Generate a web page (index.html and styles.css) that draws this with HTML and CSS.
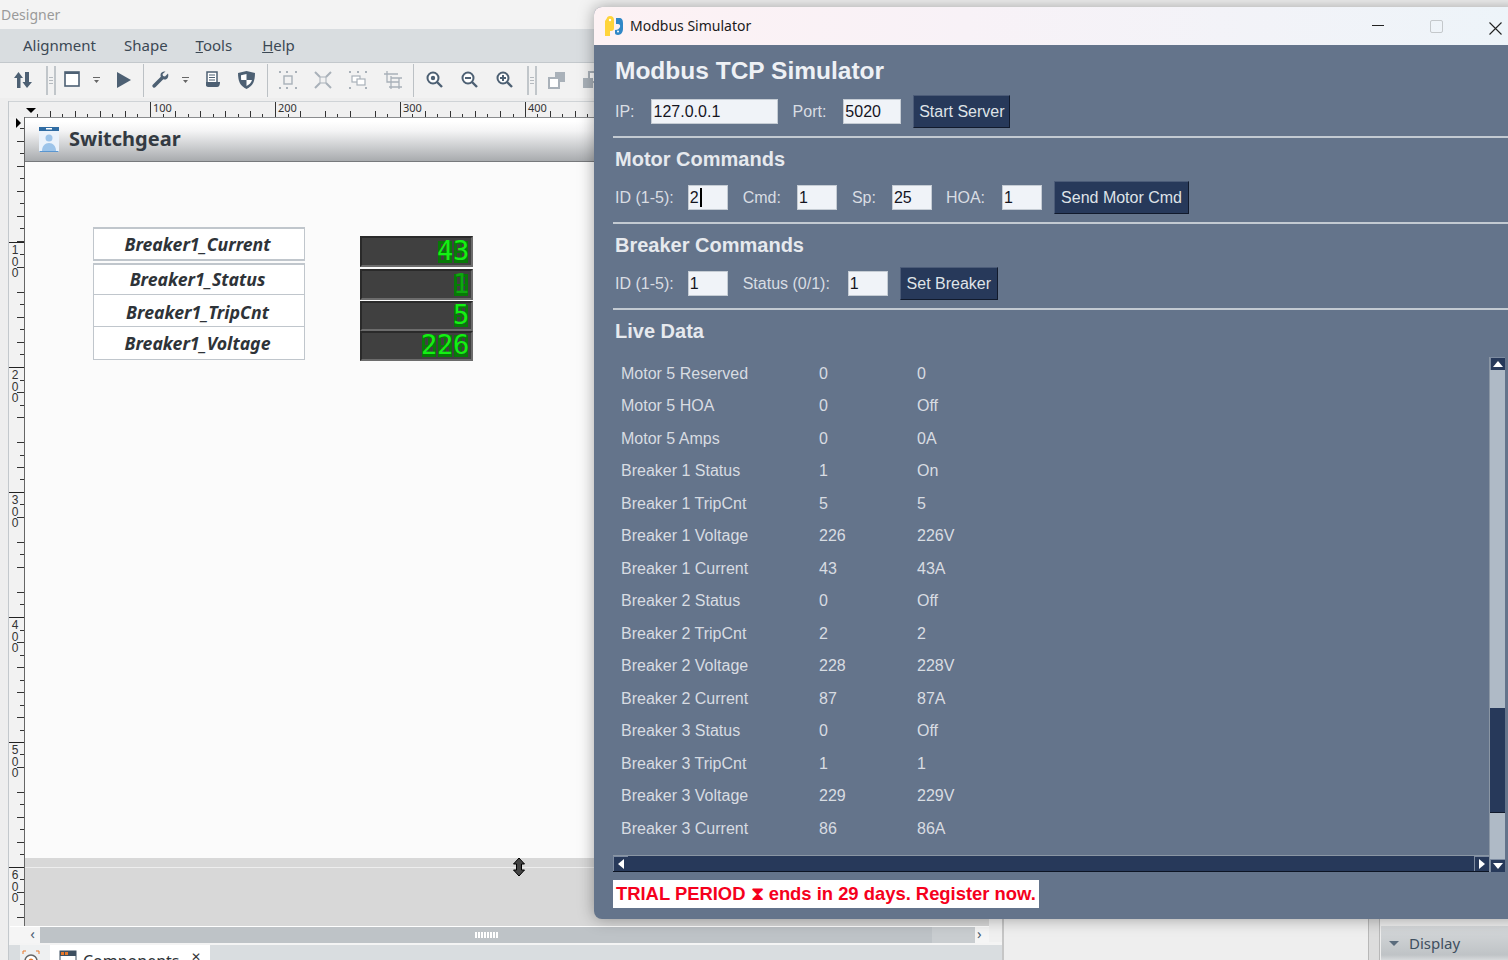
FILE: index.html
```html
<!DOCTYPE html>
<html lang="en">
<head>
    <meta charset="UTF-8">
    <title>Designer - Modbus Simulator</title>
    <link rel="stylesheet" href="styles.css">
</head>
<body>
    <!-- Designer window behind -->
    <div class="designer">
        <div class="app-title">Designer</div>
        <div class="menubar">
            <span>Alignment</span>
            <span>Shape</span>
            <span><u>T</u>ools</span>
            <span><u>H</u>elp</span>
        </div>
        <div class="toolbar">
            <svg class="tool t-swap" width="18" height="18" viewBox="0 0 18 18"><path fill="#4d6073" d="M4.500 1 0 7h3v10h3.500V7H9zM11 1v10H8.500l4.500 6 5-6h-3V1z"/></svg>
            <span class="grip"></span>
            <svg class="tool t-win" width="16" height="16" viewBox="0 0 16 16"><rect x="1" y="1" width="14" height="14" fill="#fff" stroke="#4d6073" stroke-width="1.600"/><path stroke="#4d6073" stroke-width="2" d="M1 2h14"/></svg>
            <svg class="tool t-drop" width="8" height="6" viewBox="0 0 8 6"><path fill="#666" d="M0 0h7v1H0zM1 3h5L3.500 6z"/></svg>
            <svg class="tool t-play" width="14" height="16" viewBox="0 0 14 16"><path fill="#4d6073" d="M0 0 14 8 0 16z"/></svg>
            <span class="sep s1"></span>
            <svg class="tool t-wrench" width="17" height="17" viewBox="0 0 17 17"><path fill="#4d6073" d="M16 2.500 13 5.500 11 5 10.500 3l3-2.500C11 0 8.500 1.500 8.500 4c0 .7.100 1.200.3 1.700L1 13.500c-1 1-.9 2 0 2.700.8.700 1.800.7 2.600-.1l7.700-7.800c.5.200 1 .3 1.600.3C15.500 8.600 17 5.500 16 2.500z"/></svg>
            <svg class="tool t-drop2" width="8" height="6" viewBox="0 0 8 6"><path fill="#666" d="M0 0h7v1H0zM1 3h5L3.500 6z"/></svg>
            <svg class="tool t-doc" width="16" height="16" viewBox="0 0 16 16"><path fill="#fff" stroke="#4d6073" stroke-width="1.500" d="M2 1h10v13H2z"/><path fill="#4d6073" d="M1 11h14c0 3-1 5-3 5H3c-1 0-2-1-2-2z"/><path stroke="#4d6073" stroke-width="1.200" d="M4 4h6M4 6.500h6M4 9h6"/></svg>
            <svg class="tool t-shield" width="17" height="18" viewBox="0 0 17 18"><path fill="#4d6073" d="M8.500 0 17 2c0 8-2 13-8.500 16C2 15 0 10 0 2z"/><path fill="#fff" d="M8.500 3v6H3.200C3 7.500 3 6 3 4.200zM8.500 9H14c-.7 2.600-2.600 4.600-5.500 6z"/></svg>
            <span class="sep s2"></span>
            <svg class="tool t-a1" width="18" height="18" viewBox="0 0 18 18"><rect x="5" y="5" width="8" height="8" fill="none" stroke="#a9b1b9" stroke-width="1.400"/><path stroke="#a9b1b9" stroke-width="2" d="M1 0v2M17 0v2M1 16v2M17 16v2M8 0v2M8 16v2"/></svg>
            <svg class="tool t-a2" width="18" height="18" viewBox="0 0 18 18"><path fill="none" stroke="#a9b1b9" stroke-width="2" d="M1 1l5 5M17 1l-5 5M1 17l5-5M17 17l-5-5"/><path fill="none" stroke="#a9b1b9" d="M6 6h6v6H6z"/></svg>
            <svg class="tool t-a3" width="18" height="18" viewBox="0 0 18 18"><rect x="3" y="5" width="8" height="6" fill="#fff" stroke="#a9b1b9" stroke-width="1.200"/><rect x="8" y="8" width="8" height="6" fill="#fff" stroke="#a9b1b9" stroke-width="1.200"/><path stroke="#a9b1b9" stroke-width="2" d="M1 0v2M17 0v2M1 16v2M17 16v2M9 0v2"/></svg>
            <svg class="tool t-a4" width="18" height="18" viewBox="0 0 18 18"><path fill="none" stroke="#a9b1b9" stroke-width="1.300" d="M0 3h14M3 0v11h12M3 3v8M7 5v13M7 7h11M15 7v11M5 16h13"/></svg>
            <span class="sep s3"></span>
            <svg class="tool t-z1" width="17" height="17" viewBox="0 0 17 17"><circle cx="7" cy="7" r="5.500" fill="#fff" stroke="#4d6073" stroke-width="2"/><path stroke="#4d6073" stroke-width="2.400" d="m11 11 5 5"/><circle cx="7" cy="7" r="2.200" fill="#4d6073"/></svg>
            <svg class="tool t-z2" width="17" height="17" viewBox="0 0 17 17"><circle cx="7" cy="7" r="5.500" fill="#fff" stroke="#4d6073" stroke-width="2"/><path stroke="#4d6073" stroke-width="2.400" d="m11 11 5 5"/><path stroke="#4d6073" stroke-width="2" d="M4 7h6"/></svg>
            <svg class="tool t-z3" width="17" height="17" viewBox="0 0 17 17"><circle cx="7" cy="7" r="5.500" fill="#fff" stroke="#4d6073" stroke-width="2"/><path stroke="#4d6073" stroke-width="2.400" d="m11 11 5 5"/><path stroke="#4d6073" stroke-width="2" d="M4 7h6M7 4v6"/></svg>
            <span class="grip g2"></span>
            <svg class="tool t-l1" width="18" height="18" viewBox="0 0 18 18"><rect x="7" y="1" width="10" height="10" fill="#a9b1b9"/><rect x="1" y="7" width="10" height="10" fill="#fff" stroke="#a9b1b9" stroke-width="2"/></svg>
            <svg class="tool t-l2" width="18" height="18" viewBox="0 0 18 18"><rect x="7" y="1" width="10" height="10" fill="#fff" stroke="#a9b1b9" stroke-width="2"/><rect x="1" y="7" width="10" height="10" fill="#a9b1b9"/></svg>
        </div>

        <div class="workspace">
            <div class="ruler-top">
                <span class="corner-mark"></span>
                <div class="hticks">
                    <span class="hcell first"></span>
                    <span class="hcell">100</span>
                    <span class="hcell">200</span>
                    <span class="hcell">300</span>
                    <span class="hcell">400</span>
                </div>
            </div>
            <div class="work-main">
                <div class="ruler-left">
                    <span class="side-mark"></span>
                    <div class="vcell first"></div>
                    <div class="vcell"><span class="vnum">100</span></div>
                    <div class="vcell"><span class="vnum">200</span></div>
                    <div class="vcell"><span class="vnum">300</span></div>
                    <div class="vcell"><span class="vnum">400</span></div>
                    <div class="vcell"><span class="vnum">500</span></div>
                    <div class="vcell"><span class="vnum">600</span></div>
                </div>
                <div class="form-area">
                    <div class="form-head">
                        <svg width="20" height="25" viewBox="0 0 20 25"><rect width="20" height="25" fill="#eaf2fb"/><rect width="20" height="4" fill="#2f6ca3"/><rect x="7" y="1" width="6" height="1.500" fill="#fff"/><circle cx="10" cy="11" r="3.500" fill="#9cc4ea"/><path fill="#9cc4ea" d="M3 24c0-5 3-8 7-8s7 3 7 8z"/><path stroke="#5a96d0" d="M.5 24.500h19"/></svg>
                        <span class="form-title">Switchgear</span>
                    </div>
                    <div class="form-body">
                        <div class="tag-labels">
                            <div class="tag-label first">Breaker1_Current</div>
                            <div class="tag-label second">Breaker1_Status</div>
                            <div class="tag-label third">Breaker1_TripCnt</div>
                            <div class="tag-label last">Breaker1_Voltage</div>
                        </div>
                        <div class="leds">
                            <div class="led led1"><span class="digit">4</span><span class="digit">3</span></div>
                            <div class="led led2"><span class="digit dim">1</span></div>
                            <div class="led led3"><span class="digit">5</span></div>
                            <div class="led led4"><span class="digit">2</span><span class="digit">2</span><span class="digit">6</span></div>
                        </div>
                    </div>
                    <div class="form-footer"></div>
                    <div class="hscroll">
                        <span class="hs-left">&#8249;</span>
                        <span class="hs-grip"></span>
                        <span class="hs-thumb"></span>
                        <span class="hs-right">&#8250;</span>
                    </div>
                </div>
            </div>
            <div class="dock-tabs">
                <span class="dock-icon">
                    <svg width="18" height="18" viewBox="0 0 18 18"><circle cx="9" cy="11" r="6" fill="#fff" stroke="#666" stroke-width="1.500"/><circle cx="9" cy="11" r="2.500" fill="#e8792b"/><path fill="none" stroke="#e8792b" d="M1 4V1h3M14 1h3v3"/></svg>
                </span>
                <span class="dock-tab">
                    <svg width="18" height="18" viewBox="0 0 18 18"><rect x="1" y="1" width="16" height="16" fill="#fff" stroke="#3d4f60"/><rect x="1" y="1" width="16" height="5" fill="#3d4f60"/><rect x="2" y="2" width="3" height="3" fill="#e8792b"/><rect x="6" y="2" width="3" height="3" fill="#e8792b"/></svg>
                    <span class="tab-text">Components</span>
                    <span class="tab-x">&#10005;</span>
                </span>
            </div>
        </div>
        <div class="panel-mid"></div>
        <div class="panel-split"></div>
        <div class="display-panel"><span class="tri"></span>Display</div>
    </div>

    <svg class="resize-cursor" width="14" height="20" viewBox="0 0 14 20"><path fill="#444" stroke="#000" d="M7 1 12.500 7H9.500v6h3L7 19 1.500 13h3V7h-3z"/></svg>

    <!-- Modbus simulator window -->
    <div class="sim-window">
        <div class="sim-title">
            <svg width="20" height="20" viewBox="0 0 20 20"><path fill="#ffd43b" d="M3 2c0-1 1-2 3-2 3 0 4 2 4 4v8c0 2-1 3-3 3H6v5H1V5z"/><circle cx="6" cy="4" r="1.200" fill="#fff"/><path fill="#2f87c7" d="M12 2h3c3 0 4 2 4 5v6c0 3-2 6-5 6-2 0-3-1-3-2v-3c3 0 4-1 5-3 .5-2-.5-3-2-3h-2z"/><circle cx="14" cy="15.500" r="1" fill="#fff"/></svg>
            <span class="sim-name">Modbus Simulator</span>
            <span class="win-btn min"></span>
            <span class="win-btn max"></span>
            <span class="win-btn close">
                <svg width="13" height="13" viewBox="0 0 13 13"><path stroke="#222" stroke-width="1.100" d="m.5.500 12 12M12.500.500l-12 12"/></svg>
            </span>
        </div>
        <div class="sim-body">
            <h1>Modbus TCP Simulator</h1>
            <div class="cmd-row first-row">
                <span class="lbl">IP:</span>
                <div class="field w-ip">127.0.0.1</div>
                <span class="lbl lbl-port">Port:</span>
                <div class="field w-port">5020</div>
                <button class="btn-start">Start Server</button>
            </div>
            <div class="divider"></div>
            <h2>Motor Commands</h2>
            <div class="cmd-row">
                <span class="lbl lbl-id">ID (1-5):</span>
                <div class="field">2<span class="caret"></span></div>
                <span class="lbl">Cmd:</span>
                <div class="field">1</div>
                <span class="lbl">Sp:</span>
                <div class="field w-sp">25</div>
                <span class="lbl lbl-hoa">HOA:</span>
                <div class="field">1</div>
                <button class="btn-motor">Send Motor Cmd</button>
            </div>
            <div class="divider"></div>
            <h2>Breaker Commands</h2>
            <div class="cmd-row">
                <span class="lbl lbl-id">ID (1-5):</span>
                <div class="field">1</div>
                <span class="lbl lbl-status">Status (0/1):</span>
                <div class="field">1</div>
                <button class="btn-set">Set Breaker</button>
            </div>
            <div class="divider"></div>
            <h2>Live Data</h2>

            <div class="live-box">
                <div class="live-rows">
                    <div class="live-row"><span>Motor 5 Reserved</span><span>0</span><span>0</span></div>
                    <div class="live-row"><span>Motor 5 HOA</span><span>0</span><span>Off</span></div>
                    <div class="live-row"><span>Motor 5 Amps</span><span>0</span><span>0A</span></div>
                    <div class="live-row"><span>Breaker 1 Status</span><span>1</span><span>On</span></div>
                    <div class="live-row"><span>Breaker 1 TripCnt</span><span>5</span><span>5</span></div>
                    <div class="live-row"><span>Breaker 1 Voltage</span><span>226</span><span>226V</span></div>
                    <div class="live-row"><span>Breaker 1 Current</span><span>43</span><span>43A</span></div>
                    <div class="live-row"><span>Breaker 2 Status</span><span>0</span><span>Off</span></div>
                    <div class="live-row"><span>Breaker 2 TripCnt</span><span>2</span><span>2</span></div>
                    <div class="live-row"><span>Breaker 2 Voltage</span><span>228</span><span>228V</span></div>
                    <div class="live-row"><span>Breaker 2 Current</span><span>87</span><span>87A</span></div>
                    <div class="live-row"><span>Breaker 3 Status</span><span>0</span><span>Off</span></div>
                    <div class="live-row"><span>Breaker 3 TripCnt</span><span>1</span><span>1</span></div>
                    <div class="live-row"><span>Breaker 3 Voltage</span><span>229</span><span>229V</span></div>
                    <div class="live-row"><span>Breaker 3 Current</span><span>86</span><span>86A</span></div>
                </div>
                <div class="vbar">
                    <span class="sb-btn"><i class="arrow up"></i></span>
                    <span class="vbar-space"></span>
                    <span class="vbar-thumb"></span>
                    <span class="vbar-rest"></span>
                    <span class="sb-btn"><i class="arrow down"></i></span>
                </div>
                <div class="hbar">
                    <span class="sb-btn"><i class="arrow left"></i></span>
                    <span class="hbar-thumb"></span>
                    <span class="sb-btn"><i class="arrow right"></i></span>
                </div>
            </div>
            <div class="trial">TRIAL PERIOD <span class="glass">&#10711;</span> ends in 29 days. Register now.</div>
        </div>
    </div>
</body>
</html>
```

FILE: styles.css
```css
html, body {
    margin: 0;
    width: 1508px;
    height: 960px;
    overflow: hidden;
}
body {
    position: relative;
    background-color: #eeeeee;
    font-family: 'Noto Sans', sans-serif;
    color: #2f3b47;
}

/* Designer */
.designer {
    width: 1508px;
    height: 960px;
    position: relative;
}
.app-title {
    height: 29px;
    background-color: #f3f3f3;
    color: #9a9a9a;
    font-size: 14px;
    line-height: 30px;
    padding-left: 1px;
}
.menubar {
    height: 34px;
    background-color: #d9dde0;
    display: flex;
    align-items: center;
    padding: 0 0 2px 23px;
    gap: 28px;
    font-size: 15px;
    color: #3c4854;
    border-bottom: 1px solid #c3c8cc;
    box-sizing: border-box;
}
.menubar span:last-child {
    margin-left: 2px;
}
.toolbar {
    height: 35px;
    background-color: #f2f2f2;
    position: relative;
}
.tool {
    position: absolute;
    top: 8px;
}
.t-swap { left: 14px; }
.t-win { left: 64px; top: 8px; }
.t-drop { left: 93px; top: 14px; }
.t-play { left: 117px; top: 9px; }
.t-wrench { left: 152px; }
.t-drop2 { left: 182px; top: 14px; }
.t-doc { left: 205px; }
.t-shield { left: 238px; }
.t-a1 { left: 279px; }
.t-a2 { left: 314px; }
.t-a3 { left: 349px; }
.t-a4 { left: 384px; }
.t-z1 { left: 426px; }
.t-z2 { left: 461px; }
.t-z3 { left: 496px; }
.t-l1 { left: 548px; }
.t-l2 { left: 582px; }
.grip {
    position: absolute;
    left: 46px;
    top: 3px;
    width: 10px;
    height: 29px;
    border-left: 2px solid #c1c6ca;
    border-right: 2px solid #c1c6ca;
    box-sizing: border-box;
    background: repeating-linear-gradient(#b5babf 0 1px, transparent 1px 3px) center / 4px 7px no-repeat;
}
.grip.g2 { left: 527px; }
.sep {
    position: absolute;
    top: 1px;
    width: 1px;
    height: 33px;
    background-color: #bcc1c5;
}
.s1 { left: 143px; }
.s2 { left: 267px; }
.s3 { left: 413px; }

.workspace {
    width: 993px;
    margin-left: 8px;
    border-left: 1px solid #c3c8cc;
    height: 862px;
    background-color: #f0f0f0;
    position: relative;
}
.ruler-top {
    height: 16px;
    margin-top: 3px;
    position: relative;
    padding-left: 17px;
    box-sizing: border-box;
    border-top: 1px solid #cfd3d6;
}
.corner-mark {
    position: absolute;
    left: 17px;
    top: 6px;
    border-left: 5px solid transparent;
    border-right: 5px solid transparent;
    border-top: 5px solid #000;
}
.hticks {
    display: flex;
    height: 15px;
}
.hcell {
    flex: 0 0 125px;
    box-sizing: border-box;
    font-size: 11px;
    line-height: 12px;
    padding-left: 2px;
    color: #333;
    border-left: 1px solid #333;
    background: repeating-linear-gradient(90deg, transparent 0 11.500px, #333 11.500px 12.500px) left bottom / 100% 3px no-repeat,
                repeating-linear-gradient(90deg, transparent 0 24px, #333 24px 25px) left bottom / 100% 6px no-repeat;
}
.hcell.first {
    flex-basis: 124px;
    border-left: 0;
}
.work-main {
    display: flex;
    height: 825px;
    position: relative;
}
.ruler-left {
    width: 15px;
    flex: none;
    background-color: #f2f2f2;
    border-right: 1px solid #666;
    position: relative;
    overflow: hidden;
}
.side-mark {
    position: absolute;
    left: 7px;
    top: 1px;
    border-top: 5px solid transparent;
    border-bottom: 5px solid transparent;
    border-left: 5px solid #000;
}
.vcell {
    height: 125px;
    box-sizing: border-box;
    border-top: 1px solid #222;
    color: #333;
    background: repeating-linear-gradient(180deg, transparent 0 11.500px, #333 11.500px 12.500px) right top / 4px 100% no-repeat,
                repeating-linear-gradient(180deg, transparent 0 24px, #333 24px 25px) right top / 7px 100% no-repeat;
}
.vcell.first {
    border-top: 0;
}
.vnum {
    display: block;
    writing-mode: vertical-rl;
    text-orientation: upright;
    font-family: 'Liberation Sans', sans-serif;
    font-size: 12px;
    line-height: 10px;
    letter-spacing: -2.500px;
    width: 10px;
    padding-left: 1px;
}
.form-area {
    width: 964px;
    flex: none;
    display: flex;
    flex-direction: column;
}
.form-head {
    height: 45px;
    flex: none;
    background: linear-gradient(#ffffff 8%, #f4f4f5 30%, #a8abae);
    border-top: 1px solid #8a8c8e;
    border-bottom: 1px solid #77797c;
    box-sizing: border-box;
    display: flex;
    align-items: center;
    padding-left: 14px;
    gap: 10px;
}
.form-title {
    font-size: 20px;
    font-weight: 700;
    line-height: 26px;
    padding-bottom: 1px;
    color: #333a42;
}
.form-body {
    height: 696px;
    flex: none;
    background-color: #fbfbfb;
    display: flex;
    padding: 65px 0 0 68px;
    box-sizing: border-box;
    gap: 55px;
}
.tag-labels {
    width: 212px;
}
.tag-label {
    height: 32px;
    box-sizing: border-box;
    background-color: #fff;
    border: 1px solid #c0c6cc;
    border-top-width: 0;
    padding-right: 3px;
    font-size: 17.700px;
    font-weight: 700;
    font-style: italic;
    color: #2e3338;
    display: flex;
    align-items: center;
    justify-content: center;
}
.tag-label.first {
    height: 34px;
    border-top: 2px solid #c0c6cc;
    border-bottom-width: 2px;
}
.tag-label.second {
    margin-top: 2px;
    padding-bottom: 2px;
    border-top: 2px solid #c0c6cc;
}
.tag-label.third {
    padding-top: 2px;
}
.tag-label.last {
    height: 33px;
}
.leds {
    margin-top: 9px;
    width: 113px;
}
.led {
    height: 30px;
    box-sizing: border-box;
    background-color: #404040;
    border: 2px solid;
    border-color: #2a2a2a #6c6c6c #6c6c6c #2a2a2a;
    display: flex;
    justify-content: flex-end;
    align-items: center;
    padding-right: 2px;
    font-family: 'DejaVu Sans Mono', monospace;
    font-size: 27px;
    color: #14f014;
}
.led1 { height: 31px; }
.led2 { height: 31px; margin-top: 2px; }
.led3 { margin-top: 1px; }
.digit {
    width: 16px;
    height: 22px;
    line-height: 20px;
    text-align: center;
    /* unlit segments of the readout: three bars and the side strokes */
    background:
        linear-gradient(#077a07, #077a07) 1px 0 / 14px 3px no-repeat,
        linear-gradient(#077a07, #077a07) 1px 10px / 14px 2px no-repeat,
        linear-gradient(#077a07, #077a07) 1px 19px / 14px 3px no-repeat,
        linear-gradient(#077a07, #077a07) 1px 0 / 3px 22px no-repeat,
        linear-gradient(#077a07, #077a07) 7px 0 / 2px 22px no-repeat,
        linear-gradient(#077a07, #077a07) 12px 0 / 3px 22px no-repeat;
}
.digit.dim { color: #0fa80f; }

.form-footer {
    height: 68px;
    flex: none;
    background-color: #d8d8d8;
    box-sizing: border-box;
    background-image: linear-gradient(#eeeeee, #eeeeee);
    background-repeat: no-repeat;
    background-position: 0 9px;
    background-size: 100% 1px;
}
.hscroll {
    height: 17px;
    flex: none;
    background-color: #bec3c7;
    display: flex;
    align-items: center;
    position: relative;
    margin-left: -15px;
    border-top: 1px solid #fff;
    box-sizing: border-box;
}
.hs-left, .hs-right {
    height: 16px;
    background-color: #f5f5f5;
    font-size: 15px;
    line-height: 13px;
    color: #4d6073;
}
.hs-left {
    width: 30px;
    box-sizing: border-box;
    text-align: right;
    padding-right: 5px;
}
.hs-right {
    position: absolute;
    right: 0;
    width: 14px;
    text-align: left;
    padding-left: 2px;
    box-sizing: border-box;
}
.hs-grip {
    position: absolute;
    left: 465px;
    top: 5px;
    width: 23px;
    height: 6px;
    background: repeating-linear-gradient(90deg, #fff 0 2px, #bec3c7 2px 3px);
}
.hs-thumb {
    position: absolute;
    right: 14px;
    width: 43px;
    height: 16px;
    background-color: #c9cdd0;
}
.dock-tabs {
    height: 18px;
    background-color: #d9dde0;
    border-top: 3px solid #f4f4f4;
    box-sizing: border-box;
    display: flex;
    padding-left: 11px;
}
.dock-icon {
    width: 30px;
    background-color: #eef0f1;
    box-sizing: border-box;
    padding: 5px 0 0 2px;
    overflow: hidden;
}
.dock-tab {
    width: 160px;
    background-color: #ffffff;
    display: flex;
    align-items: flex-start;
    padding: 5px 0 0 9px;
    box-sizing: border-box;
    font-size: 16px;
    color: #2e3338;
    overflow: hidden;
}
.dock-tab svg { flex: none; }
.tab-text {
    margin: 1px 0 0 6px;
    line-height: 20px;
}
.tab-x {
    font-size: 12px;
    line-height: 14px;
    margin-left: 11px;
    color: #333;
}
.panel-mid {
    position: absolute;
    left: 1002px;
    top: 900px;
    bottom: 0;
    width: 366px;
    box-sizing: border-box;
    border-left: 2px solid #c6c6c6;
}
.panel-split {
    position: absolute;
    left: 1368px;
    top: 900px;
    bottom: 0;
    width: 12px;
    box-sizing: border-box;
    border-left: 1px solid #b8b8b8;
    border-right: 1px solid #b8b8b8;
    background-color: #dddddd;
}
.display-panel {
    position: absolute;
    left: 1381px;
    top: 926px;
    right: 0;
    height: 34px;
    background: linear-gradient(#d6d9db, #bfc3c6 85%, #d6d9db);
    display: flex;
    align-items: center;
    padding-left: 8px;
    gap: 10px;
    font-size: 15px;
    color: #3f4f5f;
}
.tri {
    border-left: 5px solid transparent;
    border-right: 5px solid transparent;
    border-top: 5px solid #5a6b7c;
}
.resize-cursor {
    position: absolute;
    left: 512px;
    top: 857px;
}

/* Simulator window */
.sim-window {
    position: absolute;
    left: 594px;
    top: 7px;
    width: 930px;
    height: 912px;
    border-radius: 8px;
    overflow: hidden;
    box-shadow: 0 0 16px rgba(0, 0, 0, 0.35);
    background-color: #64748b;
    font-family: 'Liberation Sans', Arial, sans-serif;
}
.sim-title {
    height: 38px;
    background: linear-gradient(90deg, #fdf2f4, #f8f2f7 40%, #edf4f9);
    display: flex;
    align-items: center;
    padding: 0 0 1px 10px;
    box-sizing: border-box;
    font-family: 'Noto Sans', sans-serif;
    font-size: 14px;
    color: #1a1a1a;
    position: relative;
}
.sim-name { margin-left: 6px; }
.win-btn { position: absolute; }
.win-btn.min {
    left: 778px;
    top: 18px;
    width: 12px;
    height: 1px;
    background-color: #222;
}
.win-btn.max {
    left: 836px;
    top: 13px;
    width: 11px;
    height: 11px;
    border: 1px solid #c4c8cb;
    border-radius: 2px;
}
.win-btn.close {
    left: 895px;
    top: 13px;
    height: 13px;
}
.sim-body {
    padding: 0 0 0 19px;
    color: #d9dde3;
}
h1 {
    margin: 0;
    height: 50px;
    line-height: 52px;
    margin-left: 2px;
    font-size: 24.500px;
    font-weight: 700;
    color: #eef1f5;
}
h2 {
    margin: 0 0 0 2px;
    height: 32px;
    line-height: 32px;
    font-size: 20px;
    font-weight: 700;
    color: #e6e9ee;
}
.cmd-row {
    display: flex;
    align-items: center;
    height: 33px;
    padding-left: 2px;
    margin-top: 6px;
    font-size: 16px;
}
.first-row { margin-top: 0; }
.lbl {
    margin-right: 16px;
    padding-top: 1px;
}
.lbl-id { margin-right: 14px; }
.lbl-port { margin-right: 17px; }
.lbl-hoa { margin-right: 17px; }
.lbl-status { margin-right: 18px; }
.field {
    width: 40px;
    height: 25px;
    box-sizing: border-box;
    background-color: #f0f3f8;
    border: 1px solid #c5ccd4;
    color: #15151f;
    padding-left: 1px;
    line-height: 24px;
    margin-right: 15px;
    position: relative;
    font-size: 16px;
}
.w-ip { width: 127px; padding-left: 2px; }
.w-port { width: 58px; }
.w-sp { margin-right: 14px; }
.field:nth-last-child(2) { margin-right: 12px; }
.caret {
    display: inline-block;
    width: 2px;
    height: 19px;
    background-color: #000;
    vertical-align: -4px;
    margin-left: 1px;
}
button {
    height: 33px;
    padding: 0;
    background-color: #27395a;
    color: #dfe3e8;
    border: 1px solid;
    border-color: #4c5c78 #111a2c #111a2c #4c5c78;
    font-family: inherit;
    font-size: 16px;
}
.btn-start { width: 97px; }
.btn-motor { width: 135px; }
.btn-set { width: 98px; }
.divider {
    height: 2px;
    margin: 8px 0 5px 0;
    background-color: #c3cad2;
}
.live-box {
    display: grid;
    grid-template-columns: 876px 16px;
    grid-template-rows: 498px 17px;
    margin-top: 10px;
}
.live-rows {
    overflow: hidden;
    padding-top: 0.500px;
}
.live-row {
    display: grid;
    grid-template-columns: 198px 98px 1fr;
    height: 32.500px;
    align-items: center;
    padding-left: 8px;
    font-size: 16px;
    color: #d8dce2;
}
.vbar {
    grid-column: 2;
    grid-row: 1 / 3;
    background-color: #afbac6;
    display: flex;
    flex-direction: column;
    border-left: 1px solid #8a96a4;
}
.vbar .sb-btn { height: 13px; }
.vbar-space { height: 338px; }
.vbar-thumb {
    height: 104px;
    background-color: #27395a;
    border-bottom: 1px solid #111a2c;
}
.vbar-rest { flex: 1; }
.hbar {
    grid-column: 1;
    grid-row: 2;
    display: flex;
    background-color: #27395a;
    border-top: 1px solid #8a96a4;
    border-bottom: 1px solid #0d1524;
    align-items: stretch;
}
.hbar-thumb { flex: 1; }
.sb-btn {
    width: 15px;
    height: 15px;
    flex: none;
    background-color: #27395a;
    box-shadow: inset 1px 1px #7d8ba0;
    display: flex;
    align-items: center;
    justify-content: center;
}
.arrow {
    display: block;
    width: 0;
    height: 0;
    border: 5px solid transparent;
}
.arrow.up { border-bottom: 6px solid #fff; border-top: 0; }
.arrow.down { border-top: 6px solid #fff; border-bottom: 0; }
.arrow.left { border-right: 6px solid #fff; border-left: 0; }
.arrow.right { border-left: 6px solid #fff; border-right: 0; }
.trial {
    display: inline-block;
    margin-top: 8px;
    height: 28px;
    line-height: 28px;
    padding: 0 3px;
    background-color: #fff;
    color: #f5001c;
    font-size: 18.400px;
    font-weight: 700;
    white-space: nowrap;
}
.glass {
    font-family: 'DejaVu Sans', sans-serif;
    font-size: 19px;
    line-height: 1;
    font-weight: 400;
}
```
